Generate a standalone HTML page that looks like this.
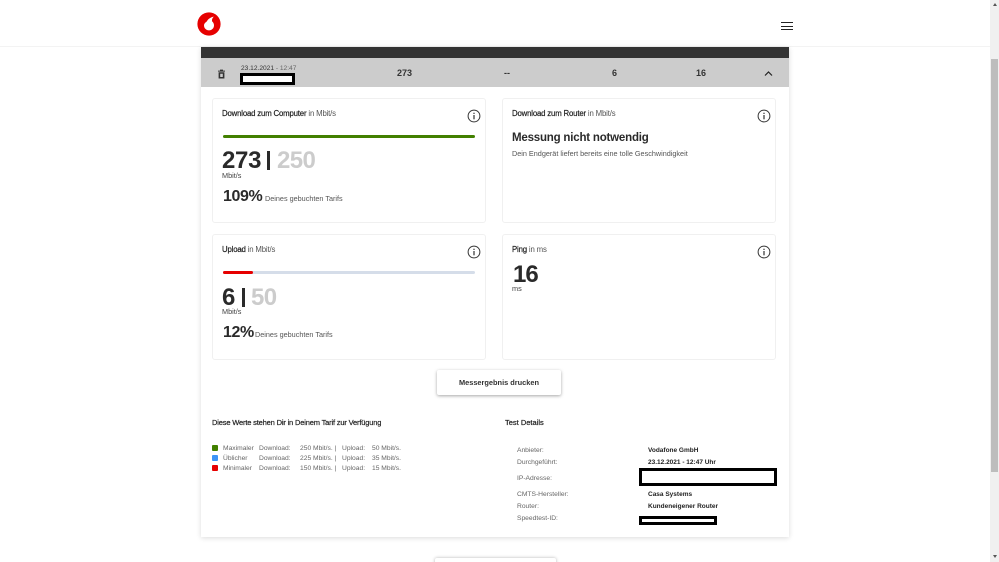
<!DOCTYPE html>
<html lang="de"><head><meta charset="utf-8"><title>Vodafone Speedtest</title>
<style>
html,body{margin:0;padding:0;width:999px;height:562px;overflow:hidden;background:#fff}
body{font-family:"Liberation Sans",sans-serif;color:#333;position:relative}
.a{position:absolute;white-space:nowrap}
.card{position:absolute;background:#fff;border:1px solid #f0f0f0;border-radius:3px;box-sizing:border-box}
.t{font-size:7.800px;letter-spacing:-.17px;line-height:10px;color:#555}
.t b{font-weight:normal;color:#222;-webkit-text-stroke:.2px #222}
.big{font-size:24px;font-weight:bold;line-height:28px;color:#2a2a2a;letter-spacing:-.3px}
.gr{font-size:24px;font-weight:bold;line-height:28px;color:#ccc;letter-spacing:-.6px}
.vb{position:absolute;width:3px;height:19px;background:#2a2a2a}
.u{font-size:7.300px;line-height:8px;color:#444}
.pct{font-size:16px;font-weight:bold;line-height:20px;color:#2a2a2a;letter-spacing:-.4px}
.s{font-size:7.250px;line-height:10px;color:#555}
.l{font-size:6.700px;line-height:10px;color:#666}
.v{font-size:6.500px;line-height:10px;color:#222;font-weight:bold}
.red{position:absolute;background:#fff;border:3px solid #000;box-sizing:border-box}
.bar{position:absolute;height:3px;border-radius:2px}
.sq{position:absolute;left:212px;width:6px;height:6px;border-radius:1px}
</style></head><body>
<!-- header -->
<div class="a" style="left:0;top:0;width:990px;height:47px;background:#fff;border-bottom:1px solid #f3f3f3;box-sizing:border-box"></div>
<svg class="a" style="left:197px;top:12px" width="24" height="24" viewBox="0 0 24 24"><circle cx="12" cy="12" r="11.600" fill="#e60000"/><path d="M9.500 9.800C11 7 13.800 5 16.800 4.600C15.500 5.800 14.800 7.300 15 9.200C16.300 10.200 17 11.700 17 13.400C17 16.200 14.800 18.400 12 18.400C9.200 18.400 7 16.200 7 13.400C7 12 8 10.600 9.500 9.800Z" fill="#fff"/></svg>
<div class="a" style="left:781px;top:22px;width:12px;height:1.400px;background:#222"></div>
<div class="a" style="left:781px;top:25.500px;width:12px;height:1.400px;background:#222"></div>
<div class="a" style="left:781px;top:29px;width:12px;height:1.400px;background:#222"></div>
<!-- scrollbar -->
<div class="a" style="left:990px;top:0;width:9px;height:562px;background:#f0f0f0"></div>
<div class="a" style="left:991px;top:59px;width:7px;height:413px;background:#bdbdbd"></div>
<div class="a" style="left:992.500px;top:3px;width:0;height:0;border-left:2.500px solid transparent;border-right:2.500px solid transparent;border-bottom:3px solid #555"></div>
<div class="a" style="left:992.500px;top:555px;width:0;height:0;border-left:2.500px solid transparent;border-right:2.500px solid transparent;border-top:3px solid #555"></div>
<!-- panel -->
<div class="a" style="left:201px;top:47px;width:588px;height:490px;background:#fff;box-shadow:0 1px 5px rgba(0,0,0,.14)"></div>
<div class="a" style="left:201px;top:47px;width:588px;height:11px;background:#333"></div>
<div class="a" style="left:201px;top:58px;width:588px;height:29px;background:#ccc"></div>
<svg class="a" style="left:218px;top:69px" width="7" height="10" viewBox="0 0 7 10"><path d="M2 .6h3v1h2v1H0v-1h2zM.6 3.200h5.800V9.500H.6zM2.200 4.800v3.200h2.600V4.800z" fill="#333" fill-rule="evenodd"/></svg>
<div class="a" style="left:241px;top:63.500px;font-size:6.600px;line-height:10px;color:#333">23.12.2021 <span style="color:#666">- 12:47</span></div>
<div class="red" style="left:240px;top:73px;width:55px;height:12px"></div>
<div class="a" style="left:397px;top:67px;font-size:9px;line-height:12px;font-weight:bold;color:#333">273</div>
<div class="a" style="left:504px;top:67px;font-size:9px;line-height:12px;font-weight:bold;color:#333">--</div>
<div class="a" style="left:612px;top:67px;font-size:9px;line-height:12px;font-weight:bold;color:#333">6</div>
<div class="a" style="left:696px;top:67px;font-size:9px;line-height:12px;font-weight:bold;color:#333">16</div>
<svg class="a" style="left:764px;top:70px" width="9" height="7" viewBox="0 0 9 7"><path d="M1 5.500L4.500 2L8 5.500" fill="none" stroke="#222" stroke-width="1.200"/></svg>
<!-- cards -->
<div class="card" style="left:212px;top:98px;width:274px;height:125px"></div>
<div class="card" style="left:502px;top:98px;width:274px;height:125px"></div>
<div class="card" style="left:212px;top:234px;width:274px;height:126px"></div>
<div class="card" style="left:502px;top:234px;width:274px;height:126px"></div>
<!-- card 1 -->
<div class="a t" style="left:222px;top:109px"><b>Download zum Computer</b> in Mbit/s</div>
<svg class="a" style="left:467px;top:109px" width="14" height="14" viewBox="0 0 14 14"><circle cx="7" cy="7" r="5.900" fill="none" stroke="#333" stroke-width="1"/><rect x="6.400" y="6" width="1.200" height="4.300" fill="#333"/><rect x="6.400" y="3.700" width="1.200" height="1.300" fill="#333"/></svg>
<div class="bar" style="left:223px;top:134.500px;width:252px;background:#428000"></div>
<div class="a big" style="left:222px;top:147px">273</div><div class="vb" style="left:267px;top:151px"></div><div class="a gr" style="left:277px;top:147px">250</div>
<div class="a u" style="left:222px;top:172px">Mbit/s</div>
<div class="a pct" style="left:223px;top:187px">109%</div>
<div class="a s" style="left:265px;top:194px">Deines gebuchten Tarifs</div>
<!-- card 2 -->
<div class="a t" style="left:512px;top:109px"><b>Download zum Router</b> in Mbit/s</div>
<svg class="a" style="left:757px;top:109px" width="14" height="14" viewBox="0 0 14 14"><circle cx="7" cy="7" r="5.900" fill="none" stroke="#333" stroke-width="1"/><rect x="6.400" y="6" width="1.200" height="4.300" fill="#333"/><rect x="6.400" y="3.700" width="1.200" height="1.300" fill="#333"/></svg>
<div class="a" style="left:512px;top:131px;font-size:11.500px;line-height:15px;font-weight:bold;color:#2a2a2a;letter-spacing:-.2px">Messung nicht notwendig</div>
<div class="a s" style="left:512px;top:149px">Dein Endgerät liefert bereits eine tolle Geschwindigkeit</div>
<!-- card 3 -->
<div class="a t" style="left:222px;top:245px"><b>Upload</b> in Mbit/s</div>
<svg class="a" style="left:467px;top:245px" width="14" height="14" viewBox="0 0 14 14"><circle cx="7" cy="7" r="5.900" fill="none" stroke="#333" stroke-width="1"/><rect x="6.400" y="6" width="1.200" height="4.300" fill="#333"/><rect x="6.400" y="3.700" width="1.200" height="1.300" fill="#333"/></svg>
<div class="bar" style="left:223px;top:271px;width:252px;background:#d5dde9"></div>
<div class="bar" style="left:223px;top:271px;width:30px;background:#e60000"></div>
<div class="a big" style="left:222px;top:284px">6</div><div class="vb" style="left:241.500px;top:288px"></div><div class="a gr" style="left:251px;top:284px">50</div>
<div class="a u" style="left:222px;top:308px">Mbit/s</div>
<div class="a pct" style="left:223px;top:323px">12%</div>
<div class="a s" style="left:255px;top:330px">Deines gebuchten Tarifs</div>
<!-- card 4 -->
<div class="a t" style="left:512px;top:245px"><b>Ping</b> in ms</div>
<svg class="a" style="left:757px;top:245px" width="14" height="14" viewBox="0 0 14 14"><circle cx="7" cy="7" r="5.900" fill="none" stroke="#333" stroke-width="1"/><rect x="6.400" y="6" width="1.200" height="4.300" fill="#333"/><rect x="6.400" y="3.700" width="1.200" height="1.300" fill="#333"/></svg>
<div class="a big" style="left:513px;top:261px;letter-spacing:-1px">16</div>
<div class="a u" style="left:512px;top:285px">ms</div>
<!-- button -->
<div class="a" style="left:437px;top:370px;width:124px;height:25px;background:#fff;border-radius:2px;box-shadow:0 1px 3px rgba(0,0,0,.35);font-size:7.400px;font-weight:bold;line-height:26px;text-align:center;color:#333">Messergebnis drucken</div>
<!-- tariff -->
<div class="a" style="left:212px;top:417px;font-size:7.500px;line-height:11px;color:#222;letter-spacing:-.17px;-webkit-text-stroke:.2px #222">Diese Werte stehen Dir in Deinem Tarif zur Verfügung</div>
<div class="sq" style="top:445px;background:#428000"></div>
<div class="sq" style="top:455px;background:#3d94f6"></div>
<div class="sq" style="top:465px;background:#e60000"></div>
<div class="a l" style="left:223px;top:444px">Maximaler</div><div class="a l" style="left:259px;top:444px">Download:</div><div class="a l" style="left:300px;top:444px">250 Mbit/s. |</div><div class="a l" style="left:342px;top:444px">Upload:</div><div class="a l" style="left:372px;top:444px">50 Mbit/s.</div>
<div class="a l" style="left:223px;top:454px">Üblicher</div><div class="a l" style="left:259px;top:454px">Download:</div><div class="a l" style="left:300px;top:454px">225 Mbit/s. |</div><div class="a l" style="left:342px;top:454px">Upload:</div><div class="a l" style="left:372px;top:454px">35 Mbit/s.</div>
<div class="a l" style="left:223px;top:464px">Minimaler</div><div class="a l" style="left:259px;top:464px">Download:</div><div class="a l" style="left:300px;top:464px">150 Mbit/s. |</div><div class="a l" style="left:342px;top:464px">Upload:</div><div class="a l" style="left:372px;top:464px">15 Mbit/s.</div>
<!-- details -->
<div class="a" style="left:505px;top:417px;font-size:7.500px;line-height:11px;color:#222;-webkit-text-stroke:.2px #222">Test Details</div>
<div class="a l" style="left:517px;top:445.500px">Anbieter:</div><div class="a v" style="left:648px;top:445.500px">Vodafone GmbH</div>
<div class="a l" style="left:517px;top:457.500px">Durchgeführt:</div><div class="a v" style="left:648px;top:457.500px">23.12.2021 - 12:47 Uhr</div>
<div class="a l" style="left:517px;top:473.500px">IP-Adresse:</div>
<div class="red" style="left:639px;top:468px;width:138px;height:18px"></div>
<div class="a l" style="left:517px;top:489.500px">CMTS-Hersteller:</div><div class="a v" style="left:648px;top:489.500px">Casa Systems</div>
<div class="a l" style="left:517px;top:501.500px">Router:</div><div class="a v" style="left:648px;top:501.500px">Kundeneigener Router</div>
<div class="a l" style="left:517px;top:513.500px">Speedtest-ID:</div>
<div class="red" style="left:639px;top:516px;width:78px;height:9px"></div>
<!-- bottom button -->
<div class="a" style="left:435px;top:558px;width:121px;height:10px;background:#fff;border-radius:2px;box-shadow:0 0 3px rgba(0,0,0,.3)"></div>
</body></html>
